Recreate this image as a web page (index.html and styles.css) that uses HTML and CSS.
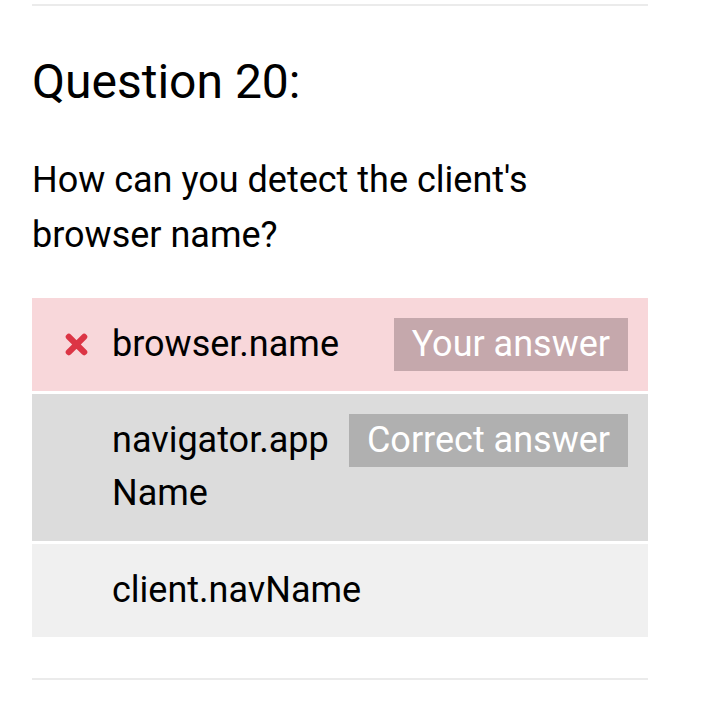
FILE: index.html
```html
<!DOCTYPE html>
<html lang="en">

<head>
    <meta charset="UTF-8">
    <meta name="viewport" content="width=device-width, initial-scale=1.0">
    <title>Quiz Result - Question 20</title>
    <link rel="stylesheet" href="styles.css">
</head>

<body>
    <div class="question-block">
        <div class="divider"></div>

        <h2 class="question-title">Question 20:</h2>
        <p class="question-text">How can you detect the client's browser name?</p>

        <!-- Answer options -->
        <ul class="options">
            <li class="option option-wrong">
                <span class="option-icon">
                    <svg width="23" height="23" viewBox="0 0 24 24">
                        <path d="M4 4 L20 20 M20 4 L4 20" stroke="#dc3545" stroke-width="6.5" stroke-linecap="round" fill="none" />
                    </svg>
                </span>
                <span class="option-label">browser.name</span>
                <span class="badge badge-yours">Your answer</span>
            </li>
            <li class="option option-correct">
                <span class="option-icon"></span>
                <span class="option-label">navigator.appName</span>
                <span class="badge badge-correct">Correct answer</span>
            </li>
            <li class="option">
                <span class="option-icon"></span>
                <span class="option-label">client.navName</span>
            </li>
        </ul>

        <div class="divider divider-bottom"></div>
    </div>
</body>

</html>
```

FILE: styles.css
```css
/* General reset */
* {
    margin: 0;
    padding: 0;
    box-sizing: border-box;
}

body {
    background: #fff;
    color: #000;
    font-family: Roboto, "Noto Sans", sans-serif;
}

.question-block {
    width: 616px;
    margin-left: 32px;
    padding-top: 4px;
}

.divider {
    height: 2px;
    background: #ebebeb;
}

.divider-bottom {
    margin-top: 41px;
}

/* Heading */
.question-title {
    font-size: 48px;
    font-weight: 400;
    line-height: 56px;
    margin-top: 48px;
}

.question-text {
    font-size: 36px;
    line-height: 55px;
    margin-top: 43px;
}

/* Options list */
.options {
    list-style: none;
    margin-top: 35px;
    display: flex;
    flex-direction: column;
    gap: 3px;
}

.option {
    display: flex;
    align-items: flex-start;
    padding: 20px 20px 20px 33px;
    background: #f0f0f0;
    font-size: 36px;
    line-height: 53px;
}

.option-wrong {
    background: #f8d7da;
}

.option-correct {
    background: #dcdcdc;
    padding-bottom: 21px;
}

.option-icon {
    flex: 0 0 47px;
    height: 53px;
    display: flex;
    align-items: center;
}

.option-icon svg {
    display: block;
}

.option-label {
    flex: 1;
    min-width: 0;
    word-break: break-all;
    margin-right: 10px;
}

/* Answer badges */
.badge {
    flex-shrink: 0;
    color: #fff;
    padding: 0 18px;
    height: 53px;
}

.badge-yours {
    background: #c5a8ac;
}

.badge-correct {
    background: #b0b0b0;
}
```
